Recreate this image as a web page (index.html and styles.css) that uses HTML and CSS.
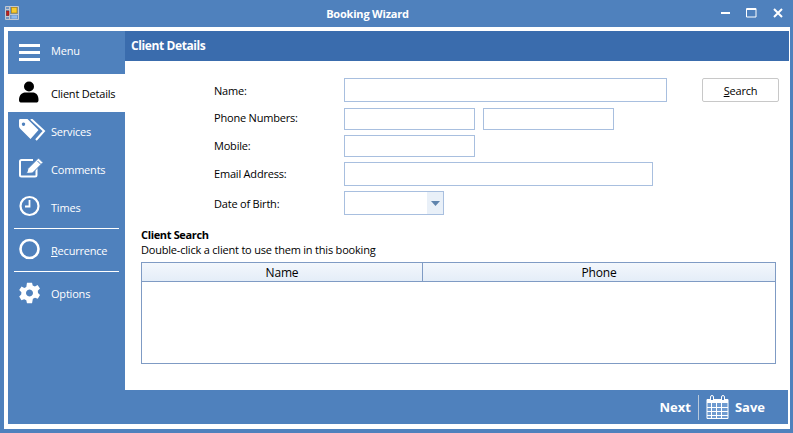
FILE: index.html
```html
<!DOCTYPE html>
<html lang="en">
<head>
<meta charset="utf-8">
<title>Booking Wizard</title>
<link rel="stylesheet" href="styles.css">
</head>
<body>
<div class="window">
  <header class="titlebar">
    <svg class="app-icon" width="14" height="14" viewBox="0 0 14 14">
      <path d="M.5 .5h13v13H.5z" fill="#6f95c4" stroke="#c3c8cf"/>
      <path d="M4.500 1v12M1 3.500h3M1 10.500h3M5 8.500h8" stroke="#c3c8cf"/>
      <rect x="6.500" y="1.500" width="5.500" height="5.500" fill="#f7cb2d" stroke="#b98a10" stroke-width=".8"/>
      <rect x="1.500" y="5" width="2.500" height="4.500" fill="#c4201a" stroke="#7c1512" stroke-width=".5"/>
      <rect x="6.500" y="9.500" width="5.500" height="3" fill="#8db8ee"/>
    </svg>
    <div class="title">Booking Wizard</div>
    <div class="controls">
      <svg width="9" height="3" viewBox="0 0 9 3"><rect width="9" height="2" y="1" fill="#fff"/></svg>
      <svg width="11" height="10" viewBox="0 0 11 10"><path d="M.5 .5h9.500v8.500h-9.500zM.5 1.500h9.500" fill="none" stroke="#fff"/></svg>
      <svg width="10" height="10" viewBox="0 0 10 10"><path d="M1 1l8 8M9 1l-8 8" stroke="#fff" stroke-width="2"/></svg>
    </div>
  </header>
  <div class="client">
    <div class="upper">
      <nav class="sidebar">
        <div class="nav-item menu">
          <svg class="nav-icon" width="22" height="18" viewBox="0 0 22 18"><path d="M0 0h21v3H0zM0 7h21v3H0zM0 14h21v3H0z" fill="#fff"/></svg>
          <span>Menu</span>
        </div>
        <div class="nav-item active">
          <svg class="nav-icon" width="20" height="22" viewBox="0 0 20 22"><circle cx="10" cy="5.500" r="5"/><path d="M0 19c0-5 3-7 5.500-7.500h9c2.500 .5 5 2.500 5 7.500 0 2-1 2.500-2.500 2.500H2.500C1 21.500 0 21 0 19z"/></svg>
          <span>Client Details</span>
        </div>
        <div class="nav-item">
          <svg class="nav-icon" width="27" height="22" viewBox="0 0 27 22"><path d="M0 1.500C0 .5 .5 0 1.500 0h7l11 11-8 9L1 9.500C.3 8.800 0 8 0 7zM4.500 3.500a1.700 1.700 0 1 0 .01 0z" fill="#fff" fill-rule="evenodd"/><path d="M12 0l13 12-8 9" fill="none" stroke="#fff" stroke-width="2"/></svg>
          <span>Services</span>
        </div>
        <div class="nav-item">
          <svg class="nav-icon" width="25" height="20" viewBox="0 0 25 20"><path d="M17.500 10v7a1.500 1.500 0 0 1-1.500 1.500H2.500A1.500 1.500 0 0 1 1 17V3.500A1.500 1.500 0 0 1 2.500 2H14" fill="none" stroke="#fff" stroke-width="2"/><path d="M7.500 15.500l1.500-5L19.500 0l4.500 4.500L13.500 15z" fill="#fff" stroke="#4f81bd"/><path d="M18.500 3l3.500 3.500" stroke="#4f81bd"/></svg>
          <span>Comments</span>
        </div>
        <div class="nav-item">
          <svg class="nav-icon" width="21" height="21" viewBox="0 0 21 21"><circle cx="10.500" cy="10.500" r="9" fill="none" stroke="#fff" stroke-width="2.200"/><path d="M10.500 4.500v6.500H6" fill="none" stroke="#fff" stroke-width="1.800"/></svg>
          <span>Times</span>
        </div>
        <div class="nav-rule first-rule"></div>
        <div class="nav-item recur">
          <svg class="nav-icon" width="21" height="21" viewBox="0 0 21 21"><circle cx="10.500" cy="10.500" r="9" fill="none" stroke="#fff" stroke-width="2.600"/></svg>
          <span><u>R</u>ecurrence</span>
        </div>
        <div class="nav-rule"></div>
        <div class="nav-item opts">
          <svg class="nav-icon" width="21" height="21" viewBox="0 0 21 21"><path fill="#fff" fill-rule="evenodd" d="M8 0h5l.7 3 2.200 1 2.700-1.500 2.400 3.500-2.200 2.200.2 2.400 2 2-2.200 3.700-2.800-1.100-2.100 1.100L13 21H8l-.7-3.200-2.100-1.100-2.800 1.100L.2 14.100l2-2 .2-2.400L.2 7.500 2.600 4l2.700 1.500 2-1z M10.500 7a3.500 3.500 0 1 0 .01 0z"/></svg>
          <span>Options</span>
        </div>
      </nav>
      <main class="main">
        <h1 class="section-head">Client Details</h1>
        <div class="form-wrap">
          <form class="form">
            <label class="lbl">Name:</label>
            <div class="row row-first"><div class="field w-name h24"></div></div>
            <label class="lbl lbl-up">Phone Numbers:</label>
            <div class="row"><div class="field w-phone h22"></div><div class="field w-phone h22"></div></div>
            <label class="lbl">Mobile:</label>
            <div class="row"><div class="field w-phone h22"></div></div>
            <label class="lbl">Email Address:</label>
            <div class="row"><div class="field w-email h24"></div></div>
            <label class="lbl lbl-down">Date of Birth:</label>
            <div class="row"><div class="field w-dob h24 combo"><div class="combo-btn"><svg width="9" height="5" viewBox="0 0 9 5"><path d="M0 0h9L4.500 5z" fill="#5f84ad"/></svg></div></div></div>
          </form>
          <button class="search" type="button"><u>S</u>earch</button>
        </div>
        <div class="results">
          <div class="results-title">Client Search</div>
          <div class="results-sub">Double-click a client to use them in this booking</div>
          <div class="table">
            <div class="thead"><div class="th th-name">Name</div><div class="th th-phone">Phone</div></div>
          </div>
        </div>
      </main>
    </div>
    <footer class="footer">
      <span class="foot-btn">Next</span>
      <div class="foot-sep"></div>
      <svg class="cal" width="23" height="24" viewBox="0 0 23 24"><path d="M1 4.500h21v19H1z" fill="#6f9bd0" stroke="#fff"/><path d="M1 4h21v4H1z" fill="#fff"/><path d="M4.500 5V2a1.500 1.500 0 0 1 3 0v3M15.500 5V2a1.500 1.500 0 0 1 3 0v3" fill="#4f81bd" stroke="#fff"/><path d="M1 12.500h21M1 16.500h21M1 20.500h21M5.500 8v15M10.500 8v15M15.500 8v15" stroke="#fff"/></svg>
      <span class="foot-btn">Save</span>
    </footer>
  </div>
</div>
</body>
</html>
```
FILE: styles.css
```css
* { box-sizing: border-box; }
html, body { margin: 0; padding: 0; }
body { width: 793px; height: 433px; overflow: hidden; font-family: "Open Sans", "Noto Sans", sans-serif; font-size: 11px; letter-spacing: -0.2px; }
.window { width: 793px; height: 433px; background: #4f81bd; padding: 0 3px 4px 4px; display: flex; flex-direction: column; }
.titlebar { height: 27px; display: flex; align-items: center; position: relative; flex: none; }
.app-icon { margin: -1px 0 0 1px; }
.title { position: absolute; left: 0; right: 0; top: 7px; text-align: center; color: #fff; font-weight: 700; font-size: 11px; line-height: 14px; padding-right: 59px; }
.controls { margin-left: auto; display: flex; align-items: center; gap: 16px; padding-right: 7px; margin-top: -2px; }
.client { flex: 1; background: #fff; padding: 4px 1px 5px 4px; display: flex; flex-direction: column; min-height: 0; }
.upper { flex: 1; display: flex; min-height: 0; }
.sidebar { width: 117px; flex: none; background: #4f81bd; color: #fff; display: flex; flex-direction: column; }
.nav-item { height: 38px; display: flex; align-items: center; position: relative; padding-left: 43px; flex: none; line-height: 14px; white-space: nowrap; }
.nav-item span { padding-top: 2px; }
.nav-item .nav-icon { position: absolute; left: 11px; top: 50%; transform: translateY(-50%); margin-top: -1px; }
.menu { height: 43px; }
.nav-item.menu span { padding: 0 0 3px; }
.menu .nav-icon { margin-top: 0; }
.active { background: #fff; color: #000; }
.recur { height: 42px; }
.opts { height: 43px; }
.nav-item.opts span { padding: 0; }
.nav-rule { height: 1px; background: #fff; margin: 0 6px; flex: none; }
.first-rule { margin-top: 2px; }
.main { flex: 1; display: flex; flex-direction: column; min-width: 0; }
.section-head { margin: 0; height: 30px; background: #3a6cad; color: #fff; font-size: 12px; font-weight: 700; line-height: 30px; padding-left: 6px; letter-spacing: -0.4px; }
.form-wrap { display: flex; padding: 17px 0 0 89px; }
.form { display: grid; grid-template-columns: 130px 323px; row-gap: 5px; align-items: center; width: 453px; }
.lbl { color: #000; line-height: 14px; }
.lbl-up { padding-bottom: 2px; }
.lbl-down { padding-top: 2px; }
.row { display: flex; gap: 8px; }
.row-first { margin-bottom: 1px; }
.field { border: 1px solid #a8bfdf; background: #fff; flex: none; }
.w-name { width: 323px; } .w-phone { width: 131px; } .w-email { width: 309px; } .w-dob { width: 100px; }
.h24 { height: 24px; } .h22 { height: 22px; }
.combo { display: flex; justify-content: flex-end; }
.combo-btn { width: 16px; background: #e9f0f8; display: flex; align-items: center; justify-content: center; }
.search { margin-left: 35px; width: 77px; height: 24px; background: #fff; border: 1px solid #c8c8c8; border-radius: 2px; font: inherit; letter-spacing: inherit; color: #000; padding: 0; }
.results { padding: 12px 0 0 16px; }
.results-title { font-weight: 700; line-height: 15px; color: #000; letter-spacing: -0.35px; }
.results-sub { line-height: 15px; color: #000; }
.table { width: 635px; height: 102px; margin-top: 5px; border: 1px solid #7f9bc4; }
.thead { display: flex; height: 19px; border-bottom: 1px solid #7f9bc4; background: linear-gradient(#f3f7fc, #e4edf8); }
.th { text-align: center; line-height: 17px; padding-top: 1px; color: #000; font-size: 12px; }
.th-name { width: 281px; border-right: 1px solid #7f9bc4; }
.th-phone { flex: 1; }
.footer { height: 34px; flex: none; background: #4f81bd; border-right: 1px solid #fff; display: flex; align-items: center; justify-content: flex-end; padding-right: 23px; color: #fff; }
.foot-btn { font-weight: 700; font-size: 13px; line-height: 18px; letter-spacing: 0; }
.foot-sep { width: 1px; height: 25px; background: #b9c9dc; margin: 0 7px; }
.cal { margin-right: 6px; }
```
